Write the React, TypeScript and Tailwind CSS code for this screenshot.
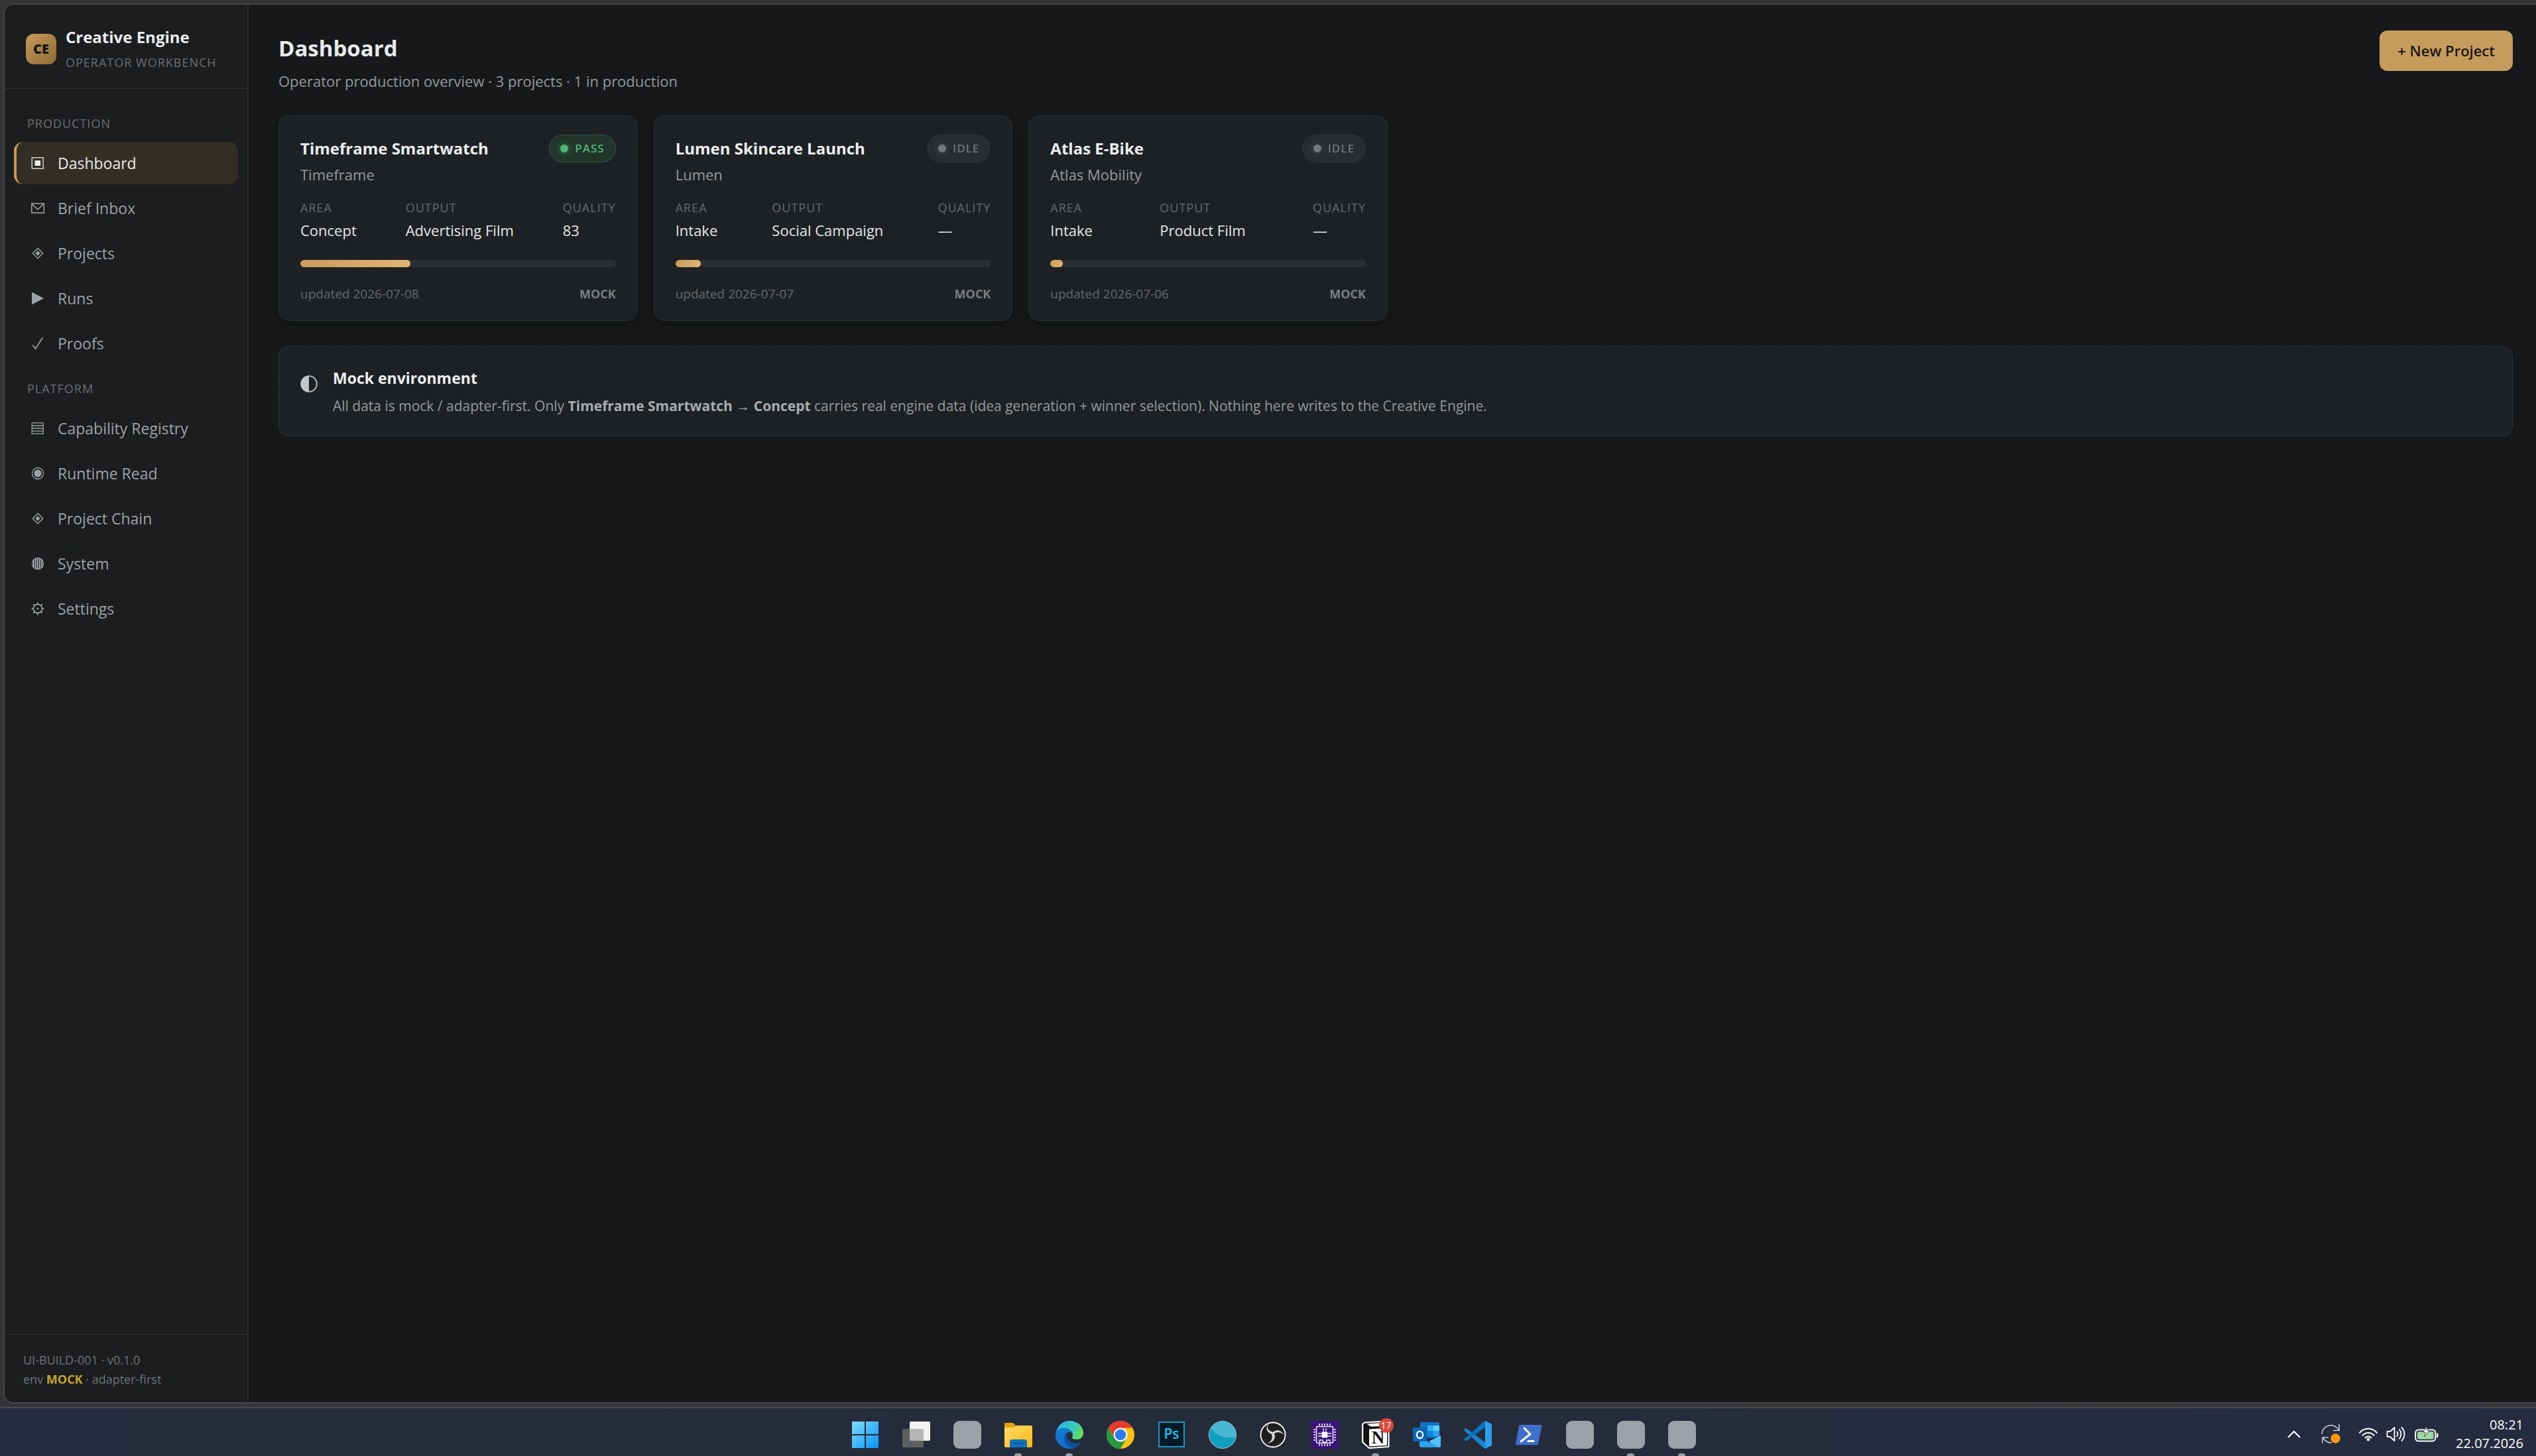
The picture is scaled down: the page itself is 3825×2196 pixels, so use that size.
import type { ReactNode } from "react";

type IconProps = { children: ReactNode };

function Glyph({ children }: IconProps) {
  return (
    <svg viewBox="0 0 20 20" className="size-5 shrink-0" fill="none" stroke="currentColor" strokeWidth="1.3" aria-hidden="true">
      {children}
    </svg>
  );
}

const icons = {
  dashboard: (
    <Glyph>
      <rect x="1.2" y="1.8" width="17" height="16.4" />
      <rect x="5.5" y="6" width="8.6" height="8" fill="currentColor" stroke="none" />
    </Glyph>
  ),
  inbox: (
    <Glyph>
      <rect x="0.8" y="3" width="18.6" height="14" strokeWidth="1.6" />
      <path d="M1.2 3.6 10 12l8.8-8.4" strokeWidth="1.6" />
    </Glyph>
  ),
  diamond: (
    <Glyph>
      <path d="M10 2.2 17.6 10 10 17.8 2.4 10Z" strokeWidth="1.5" />
      <path d="M10 6.2 13.7 10 10 13.8 6.3 10Z" fill="currentColor" stroke="none" />
    </Glyph>
  ),
  play: (
    <Glyph>
      <path d="M1 0.5 19 10 1 19.5Z" fill="currentColor" stroke="none" />
    </Glyph>
  ),
  check: (
    <Glyph>
      <path d="M2.2 12.2 6.6 18 17.4 1" strokeWidth="1.6" />
    </Glyph>
  ),
  registry: (
    <Glyph>
      <rect x="1.2" y="1.8" width="17" height="16.4" />
      <path d="M1.2 6h17M1.2 10h17M1.2 14.1h17" />
    </Glyph>
  ),
  runtime: (
    <Glyph>
      <circle cx="10" cy="10" r="8.5" />
      <circle cx="10" cy="10" r="5.7" fill="currentColor" stroke="none" />
    </Glyph>
  ),
  system: (
    <Glyph>
      <circle cx="10" cy="10" r="8.5" />
      <path d="M4 3.5v13M7 2v16M10 1.5v17M13 2v16M16 3.5v13" strokeWidth="2" />
    </Glyph>
  ),
  settings: (
    <Glyph>
      <circle cx="10" cy="10" r="6.6" strokeWidth="1.7" />
      <circle cx="10" cy="10" r="1.4" fill="currentColor" stroke="none" />
      <path d="M10 0.4v3M10 16.6v3M0.4 10h3M16.6 10h3M3.2 3.2l2 2M14.8 14.8l2 2M3.2 16.8l2-2M14.8 5.2l2-2" strokeWidth="1.7" />
    </Glyph>
  ),
};

const production = [
  { label: "Dashboard", icon: icons.dashboard, active: true },
  { label: "Brief Inbox", icon: icons.inbox },
  { label: "Projects", icon: icons.diamond },
  { label: "Runs", icon: icons.play },
  { label: "Proofs", icon: icons.check },
];

const platform = [
  { label: "Capability Registry", icon: icons.registry },
  { label: "Runtime Read", icon: icons.runtime },
  { label: "Project Chain", icon: icons.diamond },
  { label: "System", icon: icons.system },
  { label: "Settings", icon: icons.settings },
];

type NavItem = { label: string; icon: ReactNode; active?: boolean };

function NavGroup({ title, items }: { title: string; items: NavItem[] }) {
  return (
    <section>
      <h2 className="px-5 pb-3 text-lg leading-8 tracking-[1px] text-[#6b7074] uppercase">{title}</h2>
      <ul className="flex flex-col gap-1">
        {items.map((item) => (
          <li key={item.label}>
            <a
              href="#"
              aria-current={item.active ? "page" : undefined}
              className={
                item.active
                  ? "flex h-16 items-center gap-5 rounded-[14px] border-l-4 border-[#c89b5a] bg-[#322e26] pl-[22px] text-[23px] text-[#e9eaea]"
                  : "flex h-16 items-center gap-5 rounded-[14px] border-l-4 border-transparent pl-[22px] text-[23px] text-[#9da2a5]"
              }
            >
              {item.icon}
              {item.label}
            </a>
          </li>
        ))}
      </ul>
    </section>
  );
}

function Sidebar() {
  return (
    <aside className="flex w-[368px] shrink-0 flex-col border-r-2 border-[#2b2e30] bg-[#1b1d1e]">
      <div className="flex h-[127px] items-center gap-3.5 border-b border-[#303335] px-8 pt-2">
        <div className="flex size-[46px] items-center justify-center rounded-xl bg-linear-to-br from-[#c89b5a] to-[#8d6b35] text-xl font-extrabold text-[#17150f]">
          CE
        </div>
        <div>
          <div className="text-2xl leading-9 font-bold text-[#eceded]">Creative Engine</div>
          <div className="pt-1 text-lg leading-8 tracking-[1px] whitespace-nowrap text-[#6b7074]">OPERATOR WORKBENCH</div>
        </div>
      </div>
      <nav className="flex flex-1 flex-col gap-5 px-3.5 pt-9">
        <NavGroup title="Production" items={production} />
        <NavGroup title="Platform" items={platform} />
      </nav>
      <div className="border-t border-[#303335] px-7 pt-6 pb-5 text-lg leading-[29px] text-[#6f7478]">
        <p>UI-BUILD-001 · v0.1.0</p>
        <p>
          env <strong className="font-bold text-[#c9a32f]">MOCK</strong> · adapter-first
        </p>
      </div>
    </aside>
  );
}

const projects = [
  { name: "Timeframe Smartwatch", client: "Timeframe", status: "PASS", area: "Concept", output: "Advertising Film", quality: "83", progress: 35, updated: "2026-07-08" },
  { name: "Lumen Skincare Launch", client: "Lumen", status: "IDLE", area: "Intake", output: "Social Campaign", quality: "—", progress: 8, updated: "2026-07-07" },
  { name: "Atlas E-Bike", client: "Atlas Mobility", status: "IDLE", area: "Intake", output: "Product Film", quality: "—", progress: 4, updated: "2026-07-06" },
];

function StatusBadge({ status }: { status: string }) {
  const pass = status === "PASS";
  return (
    <span
      className={
        pass
          ? "flex h-[42px] items-center gap-2.5 rounded-full border border-[#2f5c43] bg-[#22352c] px-4 text-[17px] font-semibold tracking-[1px] text-[#4fb477]"
          : "flex h-[42px] items-center gap-2.5 rounded-full border border-[#2e3335] bg-[#282d2f] px-4 text-[17px] font-semibold tracking-[1px] text-[#6f7579]"
      }
    >
      <span
        className={
          pass
            ? "size-3 rounded-full bg-[#4fb872] shadow-[0_0_10px_#3c8657]"
            : "size-3 rounded-full bg-[#70767a] shadow-[0_0_10px_#4a4f52]"
        }
      />
      {status}
    </span>
  );
}

function Metric({ label, value }: { label: string; value: string }) {
  return (
    <div>
      <dt className="text-lg leading-7 tracking-[1px] text-[#65696d]">{label}</dt>
      <dd className="pt-1 text-[22px] leading-8 text-[#e6e8e9]">{value}</dd>
    </div>
  );
}

function ProjectCard({ project }: { project: (typeof projects)[number] }) {
  return (
    <article className="rounded-2xl border border-[#2b3032] bg-[#1e2124] px-8 pt-7 pb-6 shadow-[0_6px_16px_rgba(0,0,0,0.3)]">
      <div className="flex items-center justify-between">
        <h2 className="text-2xl font-bold text-[#eceeef]">{project.name}</h2>
        <StatusBadge status={project.status} />
      </div>
      <p className="pt-0.5 text-[22px] leading-8 text-[#94999c]">{project.client}</p>
      <dl className="flex justify-between pt-5">
        <Metric label="AREA" value={project.area} />
        <Metric label="OUTPUT" value={project.output} />
        <Metric label="QUALITY" value={project.quality} />
      </dl>
      <div
        role="progressbar"
        aria-label={`${project.name} progress`}
        aria-valuenow={project.progress}
        className="mt-[29px] h-[11px] overflow-hidden rounded-full bg-[#2b2f32]"
      >
        <div className="h-full rounded-full bg-linear-to-r from-[#c99c5b] to-[#e0b473]" style={{ width: `${project.progress}%` }} />
      </div>
      <div className="flex items-center justify-between pt-6 text-lg leading-8 text-[#65696d]">
        <span className="text-[19px]">updated {project.updated}</span>
        <strong className="font-bold text-[#797f84]">MOCK</strong>
      </div>
    </article>
  );
}

function Main() {
  return (
    <main className="min-w-0 flex-1 bg-[#16181a] py-[39px] pr-[35px] pl-[45px]">
      <header className="flex items-start justify-between">
        <div>
          <h1 className="text-[33px] leading-[54px] font-bold text-[#e8eaea]">Dashboard</h1>
          <p className="pt-1.5 text-[22px] leading-8 text-[#94999c]">Operator production overview · 3 projects · 1 in production</p>
        </div>
        <button type="button" className="h-[61px] rounded-xl bg-[#c69c5c] px-[27px] text-[22px] font-semibold text-[#19160f]">
          + New Project
        </button>
      </header>
      <div className="mt-9 grid grid-cols-[repeat(auto-fill,minmax(530px,1fr))] gap-6">
        {projects.map((project) => (
          <ProjectCard key={project.name} project={project} />
        ))}
      </div>
      <section className="mt-[38px] flex items-start gap-[23px] rounded-2xl border border-dashed border-[#3d4243] bg-[#1e2124] px-8 py-[27px]">
        <svg viewBox="0 0 26 26" className="mt-4 size-[26px] shrink-0" aria-hidden="true">
          <circle cx="13" cy="13" r="11.8" fill="none" stroke="#c3c6c8" strokeWidth="1.8" />
          <path d="M13 1a12 12 0 0 0 0 24Z" fill="#c3c6c8" />
        </svg>
        <div>
          <h2 className="text-[23px] leading-10 font-bold text-[#eceeef]">Mock environment</h2>
          <p className="pt-1 text-[21px] leading-9 text-[#94999c]">
            All data is mock / adapter-first. Only <strong className="font-bold text-[#a7acaf]">Timeframe Smartwatch → Concept</strong> carries real engine data (idea
            generation + winner selection). Nothing here writes to the Creative Engine.
          </p>
        </div>
      </section>
    </main>
  );
}

function Placeholder() {
  return <div className="size-[42px] rounded-[9px] bg-[#9da0a9]" />;
}

function Art({ children }: { children: ReactNode }) {
  return (
    <svg viewBox="0 0 42 42" className="size-[42px]" aria-hidden="true">
      {children}
    </svg>
  );
}

const apps: { name: string; running?: boolean; art: ReactNode }[] = [
  {
    name: "Start",
    art: (
      <Art>
        <defs>
          <linearGradient id="start" x1="0" y1="0" x2="1" y2="1" gradientUnits="objectBoundingBox">
            <stop offset="0" stopColor="#7fdcff" />
            <stop offset="1" stopColor="#0a93f5" />
          </linearGradient>
        </defs>
        <path fill="url(#start)" d="M2 1h18v19H1V2a1 1 0 0 1 1-1ZM22 1h18a1 1 0 0 1 1 1v18H22ZM1 22h19v19H2a1 1 0 0 1-1-1ZM22 22h19v18a1 1 0 0 1-1 1H22Z" />
      </Art>
    ),
  },
  {
    name: "Task view",
    art: (
      <Art>
        <rect x="11" y="1" width="31" height="29" rx="2" fill="#f3f3f4" />
        <rect x="0" y="12" width="32" height="28" rx="2" fill="#5e605f" />
        <path d="M11 12h19a2 2 0 0 1 2 2v16H13a2 2 0 0 1-2-2Z" fill="#b5b6b6" />
      </Art>
    ),
  },
  { name: "Pinned app", art: <Placeholder /> },
  {
    name: "File Explorer",
    running: true,
    art: (
      <Art>
        <defs>
          <linearGradient id="folder" x1="0" y1="0" x2="1" y2="1">
            <stop offset="0" stopColor="#ffdd6b" />
            <stop offset="1" stopColor="#fbb710" />
          </linearGradient>
        </defs>
        <path d="M0 5a2 2 0 0 1 2-2h11l4 4v6H0Z" fill="#e2a209" />
        <path d="M0 10h14l4-3h22a2 2 0 0 1 2 2v29a2 2 0 0 1-2 2H2a2 2 0 0 1-2-2Z" fill="url(#folder)" />
        <path d="M8 40V32a4 4 0 0 1 4-4h18a4 4 0 0 1 4 4v8Z" fill="#0b72bd" />
        <path d="M14 34h14" stroke="#074a86" strokeWidth="1.6" />
      </Art>
    ),
  },
  {
    name: "Edge",
    running: true,
    art: (
      <Art>
        <defs>
          <linearGradient id="edgeTop" x1="0" y1="0.3" x2="1" y2="0.7">
            <stop offset="0" stopColor="#2fb3ea" />
            <stop offset="0.55" stopColor="#35c9bd" />
            <stop offset="1" stopColor="#6be14b" />
          </linearGradient>
          <linearGradient id="edgeBase" x1="0" y1="0" x2="0.6" y2="1">
            <stop offset="0" stopColor="#1583cf" />
            <stop offset="1" stopColor="#0c64c0" />
          </linearGradient>
        </defs>
        <path d="M1 17C3 7 11 0 21 0c12 0 21 8 21 18 0 7-5 10-10 10-4 0-7-1-7-3 0-1 1-2 1-4 0-5-5-9-11-9C8 12 3 14 1 17Z" fill="url(#edgeTop)" />
        <path d="M0 21C0 15 6 10 14 11c7 0 12 5 12 10-1-3-4-5-6-4-5 2-5 10-1 15 4 6 12 6 18 2-4 5-9 8-16 8C9 42 0 33 0 21Z" fill="url(#edgeBase)" />
        <path d="M18 17c-6 3-6 12-1 18 3 4 7 6 12 5 4-1 7-4 9-8-6 3-13 3-17-2-4-4-5-9-3-13Z" fill="#0d4e9e" />
      </Art>
    ),
  },
  {
    name: "Chrome",
    art: (
      <Art>
        <circle cx="21" cy="21" r="21" fill="#fbc116" />
        <path d="M2.8 10.5A21 21 0 0 0 21 42l9.1-15.8L21 21l-9.1 5.2Z" fill="#249a41" />
        <path d="M2.8 10.5A21 21 0 0 1 39.2 10.5H21L11.9 26.2Z" fill="#e33b2e" />
        <circle cx="21" cy="21" r="10.500" fill="#fff" />
        <circle cx="21" cy="21" r="8.300" fill="#2d7bee" />
      </Art>
    ),
  },
  {
    name: "Photoshop",
    art: (
      <Art>
        <rect x="2" y="2" width="38" height="37" fill="#021a24" stroke="#15b7e8" strokeWidth="1.6" />
        <text x="21" y="27" textAnchor="middle" fontSize="21" fontWeight="600" fill="#1fc0f0">
          Ps
        </text>
      </Art>
    ),
  },
  {
    name: "Browser",
    art: (
      <Art>
        <circle cx="21" cy="21" r="20.500" fill="#0fa0bf" stroke="#a9c6cf" />
        <path d="M3.500 11A20 20 0 0 1 41 21v4C27 27 12 23 3.500 11Z" fill="#4ab8d2" />
      </Art>
    ),
  },
  {
    name: "OBS",
    art: (
      <Art>
        <circle cx="20" cy="21" r="18.500" fill="#211e1f" stroke="#fff" strokeWidth="1.800" />
        <path
          d="M14 4c-4 6-2 11 6 13 6-5 13-3 16 4-4-4-9-5-14-2 3 8-2 14-11 15 6-2 9-7 7-14C10 17 8 10 14 4Z"
          fill="#d8d5d5"
        />
      </Art>
    ),
  },
  {
    name: "System monitor",
    art: (
      <Art>
        <rect width="42" height="42" fill="#3a1478" />
        <g fill="none" stroke="#f5f0ff" strokeWidth="1.600">
          <rect x="8.500" y="8.500" width="25" height="25" rx="2" />
          <path d="M13 7V4M17 7V4M21 7V4M25 7V4M29 7V4M13 38v-3M17 38v-3M21 38v-3M25 38v-3M29 38v-3M7 13H4M7 17H4M7 21H4M7 25H4M7 29H4M38 13h-3M38 17h-3M38 21h-3M38 25h-3M38 29h-3" />
          <path d="M19 16v-5M23 16v-5M16 19h-5M16 23h-5M26 19h5M26 23h5M13 33v-4h5v3h6v-3h5v4" strokeWidth="1.300" />
        </g>
        <rect x="16.500" y="16.500" width="9" height="9" rx="1" fill="#fff" />
      </Art>
    ),
  },
  {
    name: "Notion",
    running: true,
    art: (
      <div className="relative">
        <Art>
          <path d="M4 2.500 30 1l10.500 8v30L11 41 1.200 32V5Z" fill="#111" stroke="#fff" strokeWidth="2.200" strokeLinejoin="round" />
          <path d="M7 4.500 27 3.300l6 4.500-19 1Z" fill="#fff" />
          <path d="M11 12.500 38 11v26l-27 1.500Z" fill="#fff" />
          <text x="24.500" y="34" textAnchor="middle" fontSize="27" fontWeight="700" fontFamily="Liberation Serif, serif" fill="#111">
            N
          </text>
        </Art>
        <span className="absolute -top-1 -right-1.5 flex size-[22px] items-center justify-center rounded-full bg-[#d9483d] text-sm text-white">17</span>
      </div>
    ),
  },
  {
    name: "Outlook",
    art: (
      <Art>
        <rect x="11" y="2" width="29" height="24" rx="2" fill="#1273c4" />
        <path d="M22 7h9v8h-9Z" fill="#35b0ee" />
        <path d="M31 7h9v8h-9Z" fill="#55d2ff" />
        <path d="M22 15h9v8h-9Z" fill="#1287dd" />
        <path d="M31 15h9v8h-9Z" fill="#2ea5ec" />
        <path d="M10 25 26 33 42 22v15a3 3 0 0 1-3 3H13a3 3 0 0 1-3-3Z" fill="#2ba3ea" />
        <path d="M24 31 42 22v15a3 3 0 0 1-2 3Z" fill="#55c3f8" />
        <rect y="10" width="21" height="21" rx="2" fill="#0a64b8" />
        <ellipse cx="10.500" cy="21" rx="4.600" ry="5.200" fill="none" stroke="#fff" strokeWidth="2.400" />
      </Art>
    ),
  },
  {
    name: "VS Code",
    art: (
      <Art>
        <path d="M0 14 3 11 33 33v9L30 41Z" fill="#1687d0" />
        <path d="M0 28 3 31 33 9V0L30 1Z" fill="#0a70ba" />
        <path d="M32 0 42 5v32l-10 5V0Z" fill="#2ca0ec" />
      </Art>
    ),
  },
  {
    name: "PowerShell",
    art: (
      <Art>
        <path d="M8 6h31a1.500 1.500 0 0 1 1.400 2L35 35a2 2 0 0 1-2 1.500H2.500A1.500 1.500 0 0 1 1 34.500L6 8a2 2 0 0 1 2-2Z" fill="#3f6fcb" />
        <path d="M14 11 23 20 9 31M20 30.500h8" fill="none" stroke="#fff" strokeWidth="3" strokeLinecap="round" strokeLinejoin="round" />
      </Art>
    ),
  },
  { name: "App one", art: <Placeholder /> },
  { name: "App two", running: true, art: <Placeholder /> },
  { name: "App three", running: true, art: <Placeholder /> },
];

function Taskbar() {
  return (
    <footer className="grid h-[74px] shrink-0 grid-cols-[1fr_auto_1fr] border-t-2 border-[#4a4b50] bg-linear-to-r from-[#262c3d] via-[#242b39] to-[#262c40]">
      <span />
      <div className="flex gap-[35px] pl-4">
        {apps.map((app) => (
          <button key={app.name} type="button" aria-label={app.name} className="relative flex h-full w-[42px] items-center justify-center pt-2">
            {app.art}
            {app.running && <span className="absolute bottom-0 h-1 w-[11px] rounded-t-sm bg-[#9a9da6]" />}
          </button>
        ))}
      </div>
      <div className="flex items-center justify-end pt-1.5 pr-[19px] text-white">
        <svg viewBox="0 0 20 12" className="mr-[31px] h-3 w-5" fill="none" stroke="currentColor" strokeWidth="2.200" aria-hidden="true">
          <path d="M1 11 10 2l9 9" />
        </svg>
        <svg viewBox="0 0 30 30" className="mr-[26px] size-[30px]" fill="none" stroke="#c9ccd4" strokeWidth="1.600" aria-hidden="true">
          <path d="M1 15C1 2 19-4 26.500 9M27 0v9.500h-9M2 28.500V20h9M2.500 20.500C6 26 11 28 16 28" />
          <circle cx="21.500" cy="21.500" r="7.200" fill="#f99a0e" stroke="none" />
        </svg>
        <svg viewBox="0 0 30 22" className="mr-3 h-[22px] w-[30px]" fill="none" stroke="currentColor" strokeWidth="2" aria-hidden="true">
          <path d="M1.500 9.500c7.500-9 19.500-9 27 0M6 13.500c5-6 13-6 18 0M10 17c3-3.500 7-3.500 10 0" />
          <circle cx="15" cy="19" r="2.400" fill="currentColor" stroke="none" />
        </svg>
        <svg viewBox="0 0 29 26" className="mr-3.5 h-[26px] w-[29px]" fill="none" stroke="currentColor" strokeWidth="1.800" strokeLinejoin="round" aria-hidden="true">
          <path d="M1.500 9h4.500l6.500-6v20L6 17H1.500ZM16 9c2 2.500 2 5.500 0 8M19.500 5.500c4 4.500 4 10.500 0 15M23 2.500c6 6 6 15 0 21" />
        </svg>
        <svg viewBox="0 0 36 24" className="mr-[26px] h-6 w-9" aria-hidden="true">
          <rect x="1.200" y="5.500" width="30" height="17" rx="4.500" fill="none" stroke="#fff" strokeWidth="2" />
          <rect x="4" y="8.300" width="24.500" height="11.400" rx="2" fill="#9fd6a2" />
          <path d="M33 10.500c2 0 2.500 1 2.500 3.500S35 17.500 33 17.500Z" fill="#fff" />
          <path d="M18.500 0 12.500 9h4l-2 7 8-10h-4.500Z" fill="#fff" stroke="#272d3d" strokeWidth="0.800" />
        </svg>
        <div className="text-right text-xl leading-7">
          <div>08:21</div>
          <div>22.07.2026</div>
        </div>
      </div>
    </footer>
  );
}

export default function App() {
  return (
    <div className="flex min-h-screen flex-col bg-[#333435] font-['Open_Sans','Noto_Sans',sans-serif]">
      <div className="mb-[5px] flex flex-1 pt-[5px] pl-[5px]">
        <div className="flex flex-1 overflow-hidden rounded-l-[16px] border-y-2 border-l-2 border-[#454647]">
          <Sidebar />
          <Main />
        </div>
      </div>
      <Taskbar />
    </div>
  );
}
